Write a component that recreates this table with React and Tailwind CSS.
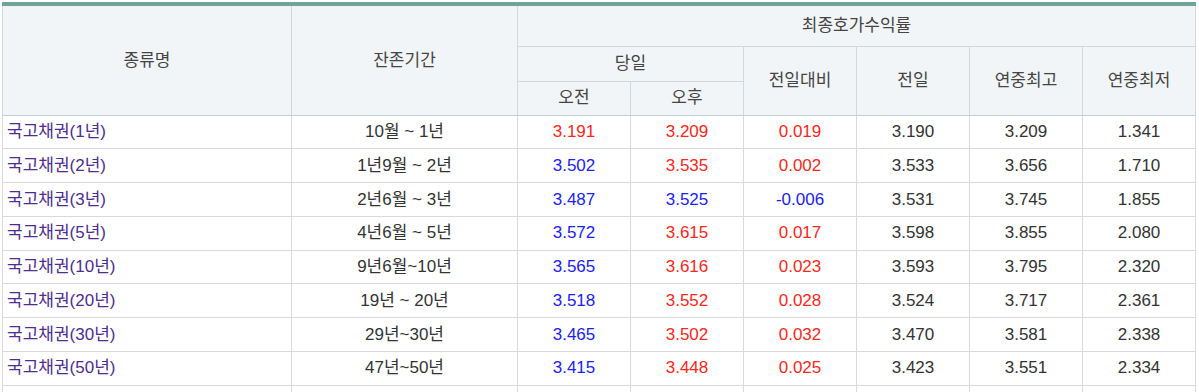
import React from "react";

const rows = [
  { name: "국고채권(1년)", term: "10월 ~ 1년", am: ["3.191", "r"], pm: ["3.209", "r"], diff: ["0.019", "r"], prev: "3.190", high: "3.209", low: "1.341" },
  { name: "국고채권(2년)", term: "1년9월 ~ 2년", am: ["3.502", "b"], pm: ["3.535", "r"], diff: ["0.002", "r"], prev: "3.533", high: "3.656", low: "1.710" },
  { name: "국고채권(3년)", term: "2년6월 ~ 3년", am: ["3.487", "b"], pm: ["3.525", "b"], diff: ["-0.006", "b"], prev: "3.531", high: "3.745", low: "1.855" },
  { name: "국고채권(5년)", term: "4년6월 ~ 5년", am: ["3.572", "b"], pm: ["3.615", "r"], diff: ["0.017", "r"], prev: "3.598", high: "3.855", low: "2.080" },
  { name: "국고채권(10년)", term: "9년6월~10년", am: ["3.565", "b"], pm: ["3.616", "r"], diff: ["0.023", "r"], prev: "3.593", high: "3.795", low: "2.320" },
  { name: "국고채권(20년)", term: "19년 ~ 20년", am: ["3.518", "b"], pm: ["3.552", "r"], diff: ["0.028", "r"], prev: "3.524", high: "3.717", low: "2.361" },
  { name: "국고채권(30년)", term: "29년~30년", am: ["3.465", "b"], pm: ["3.502", "r"], diff: ["0.032", "r"], prev: "3.470", high: "3.581", low: "2.338" },
  { name: "국고채권(50년)", term: "47년~50년", am: ["3.415", "b"], pm: ["3.448", "r"], diff: ["0.025", "r"], prev: "3.423", high: "3.551", low: "2.334" },
  { name: "", term: "", am: ["", "b"], pm: ["", "r"], diff: ["", "r"], prev: "", high: "", low: "" },
];

const color = (c) => (c === "r" ? "text-[#f5281c]" : "text-[#1a22f5]");

const th = "border border-[#d3d8dd] font-normal text-[#444] text-center align-middle";
const td = "border border-[#d9dadc] text-center align-middle";
const dark = "text-[#333]";

export default function App() {
  return (
    <div className="bg-white h-[392px] overflow-hidden pl-[2px] pt-[2px] font-['Liberation_Sans','Noto_Sans_CJK_KR',sans-serif] text-[17px]">
      <table className="table-fixed border-collapse w-[1194px] border-t-4 border-t-[#6fa496]">
        <colgroup>
          <col className="w-[289px]" />
          <col className="w-[226px]" />
          <col className="w-[113px]" />
          <col className="w-[113px]" />
          <col className="w-[113px]" />
          <col className="w-[113px]" />
          <col className="w-[113px]" />
          <col className="w-[113px]" />
        </colgroup>
        <thead className="bg-[#f2f5f7]">
          <tr className="h-[42px]">
            <th rowSpan={3} className={`${th} border-t-0 border-b-[#c3cddb]`}>종류명</th>
            <th rowSpan={3} className={`${th} border-t-0 border-b-[#c3cddb]`}>잔존기간</th>
            <th colSpan={6} className={`${th} border-t-0`}>최종호가수익률</th>
          </tr>
          <tr className="h-[35px]">
            <th colSpan={2} className={th}>당일</th>
            <th rowSpan={2} className={`${th} border-b-[#c3cddb]`}>전일대비</th>
            <th rowSpan={2} className={`${th} border-b-[#c3cddb]`}>전일</th>
            <th rowSpan={2} className={`${th} border-b-[#c3cddb]`}>연중최고</th>
            <th rowSpan={2} className={`${th} border-b-[#c3cddb]`}>연중최저</th>
          </tr>
          <tr className="h-[34px]">
            <th className={`${th} border-b-[#c3cddb]`}>오전</th>
            <th className={`${th} border-b-[#c3cddb]`}>오후</th>
          </tr>
        </thead>
        <tbody>
          {rows.map((r, i) => (
            <tr key={i} className="h-[33.75px]">
              <td className={`border border-[#d9dadc] align-middle text-left pl-[4px] text-[#4d2d8e]`}>{r.name}</td>
              <td className={`${td} ${dark}`}>{r.term}</td>
              <td className={`${td} ${color(r.am[1])}`}>{r.am[0]}</td>
              <td className={`${td} ${color(r.pm[1])}`}>{r.pm[0]}</td>
              <td className={`${td} ${color(r.diff[1])}`}>{r.diff[0]}</td>
              <td className={`${td} ${dark}`}>{r.prev}</td>
              <td className={`${td} ${dark}`}>{r.high}</td>
              <td className={`${td} ${dark}`}>{r.low}</td>
            </tr>
          ))}
        </tbody>
      </table>
    </div>
  );
}
